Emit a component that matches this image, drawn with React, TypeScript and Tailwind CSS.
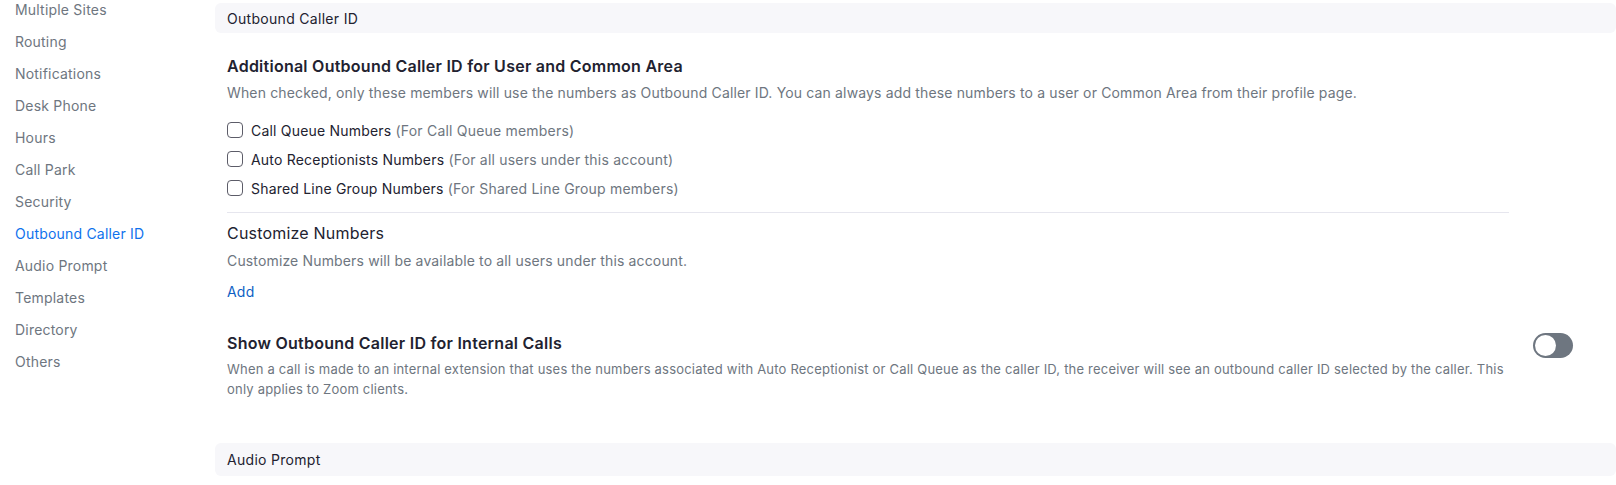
import React, { useState } from 'react';

const navItems = [
  'Multiple Sites',
  'Routing',
  'Notifications',
  'Desk Phone',
  'Hours',
  'Call Park',
  'Security',
  'Outbound Caller ID',
  'Audio Prompt',
  'Templates',
  'Directory',
  'Others',
];

const callerOptions = [
  { label: 'Call Queue Numbers', hint: '(For Call Queue members)' },
  { label: 'Auto Receptionists Numbers', hint: '(For all users under this account)' },
  { label: 'Shared Line Group Numbers', hint: '(For Shared Line Group members)' },
];

function SectionBar({ title, className = '' }: { title: string; className?: string }) {
  return (
    <div className={`flex items-center rounded-md bg-[#f7f7fa] px-3 text-[14px] tracking-[0.3px] text-[#222230] ${className}`}>
      {title}
    </div>
  );
}

export default function App() {
  const [checked, setChecked] = useState<boolean[]>([false, false, false]);
  const [showInternal, setShowInternal] = useState(false);
  const active = 'Outbound Caller ID';

  return (
    <div className="flex h-[485px] overflow-hidden bg-white font-['Inter','Liberation_Sans',sans-serif] antialiased">
      <nav className="w-[215px] shrink-0 pl-[15px] -mt-[7px]">
        {navItems.map((item) => (
          <div
            key={item}
            className={`flex h-8 items-center text-[14px] tracking-[0.2px] ${
              item === active ? 'text-[#0e72ed]' : 'text-[#6e7680]'
            }`}
          >
            {item}
          </div>
        ))}
      </nav>

      <main className="flex-1 min-w-0">
        <SectionBar title="Outbound Caller ID" className="mt-[3px] h-[30px]" />

        <div className="px-3">
          <div className="flex">
            <div className="w-[1282px]">
              <h3 className="mt-[23px] text-[16px] leading-5 font-semibold tracking-[0.25px] text-[#222230]">
                Additional Outbound Caller ID for User and Common Area
              </h3>
              <p className="mt-[7px] text-[14px] leading-5 tracking-[0.15px] text-[#6e7680]">
                When checked, only these members will use the numbers as Outbound Caller ID. You can always add these numbers to a user or Common Area from their profile page.
              </p>
              <div className="mt-[17px] flex flex-col gap-[9px]">
                {callerOptions.map((opt, idx) => (
                  <label key={opt.label} className="flex h-5 cursor-pointer items-center gap-2 text-[14px] tracking-[0.2px]">
                    <span
                      onClick={() => setChecked((c) => c.map((v, i) => (i === idx ? !v : v)))}
                      className={`h-4 w-4 rounded-[4px] border ${
                        checked[idx] ? 'border-[#0e72ed] bg-[#0e72ed]' : 'border-[#5c5c68] bg-white'
                      }`}
                    />
                    <span className="text-[#222230]">
                      {opt.label} <span className="text-[#6e7680]">{opt.hint}</span>
                    </span>
                  </label>
                ))}
              </div>
              <div className="mt-[14px] h-px bg-[#e6e6ee]" />

              <h3 className="mt-2 text-[16px] leading-6 tracking-[0.2px] text-[#222230]">Customize Numbers</h3>
              <p className="mt-[6px] text-[14px] leading-5 tracking-[0.15px] text-[#6e7680]">
                Customize Numbers will be available to all users under this account.
              </p>
              <button className="mt-[11px] block text-[14px] leading-5 tracking-[0.2px] text-[#0e5fc4]">Add</button>

              <h3 className="mt-[31px] text-[16px] leading-5 font-semibold tracking-[0.25px] text-[#222230]">
                Show Outbound Caller ID for Internal Calls
              </h3>
              <p className="mt-[6px] text-[13px] leading-5 tracking-[0.2px] text-[#6e7680]">
                When a call is made to an internal extension that uses the numbers associated with Auto Receptionist or Call Queue as the caller ID, the receiver will see an outbound caller ID selected by the caller. This only applies to Zoom clients.
              </p>
            </div>

            <div className="ml-6 mt-[300px]">
              <button
                onClick={() => setShowInternal((v) => !v)}
                className={`flex h-[25px] w-10 items-center rounded-full p-[2px] ${
                  showInternal ? 'justify-end bg-[#0e72ed]' : 'justify-start bg-[#6e7680]'
                }`}
              >
                <span className="h-[21px] w-[21px] rounded-full bg-white" />
              </button>
            </div>
          </div>
        </div>

        <SectionBar title="Audio Prompt" className="mt-[44px] h-[33px]" />
      </main>
    </div>
  );
}
